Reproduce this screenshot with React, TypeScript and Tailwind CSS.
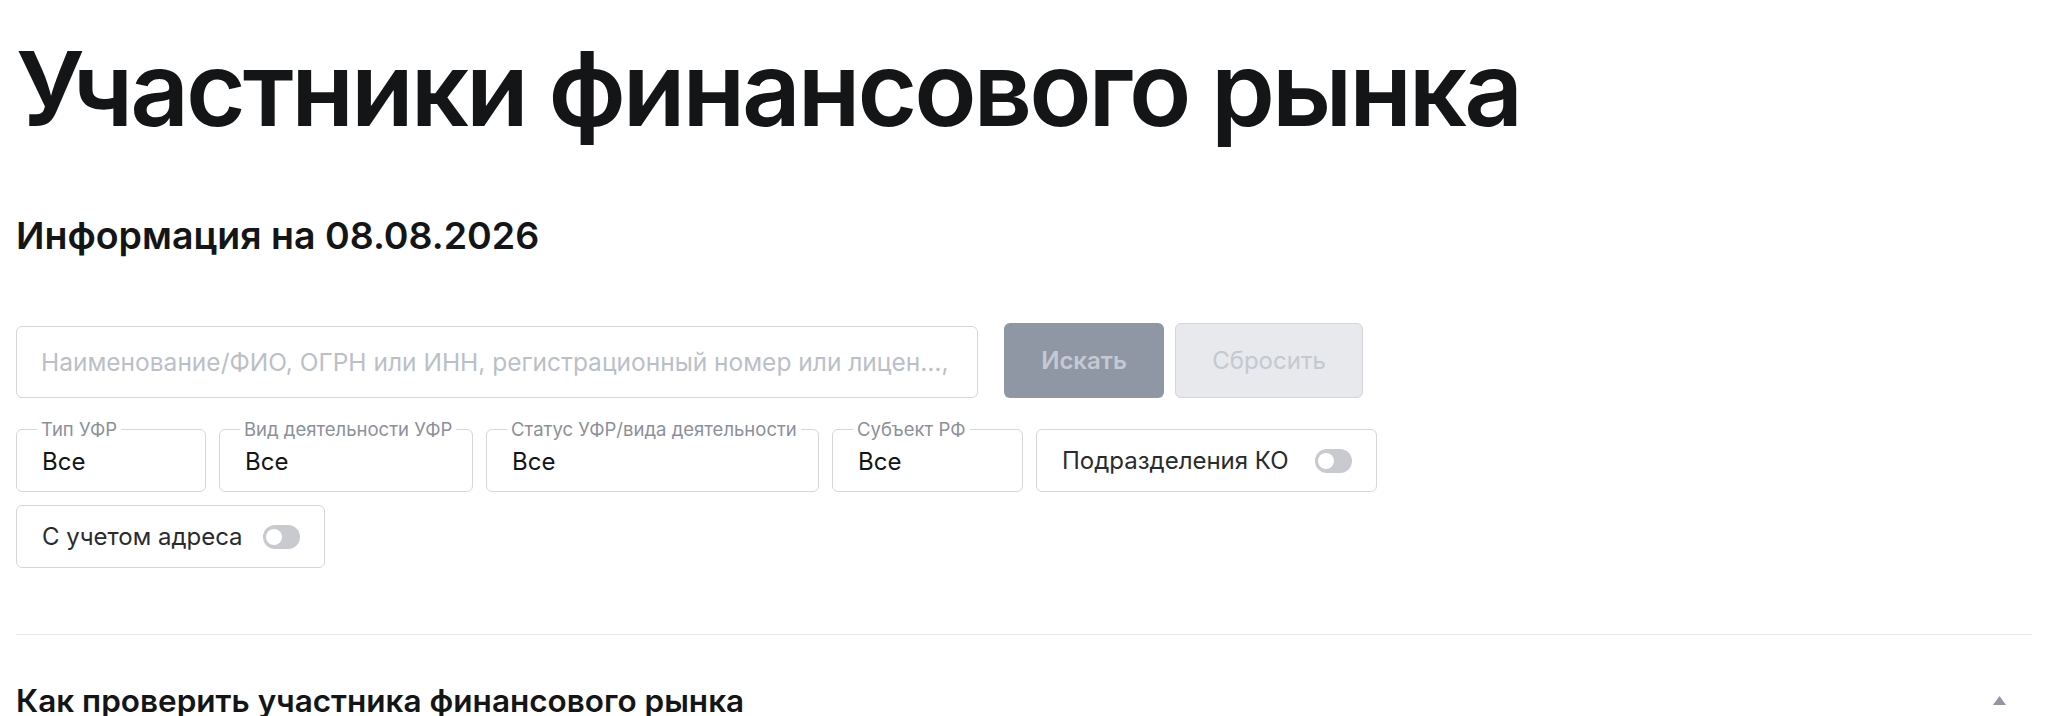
const font = { fontFamily: 'Inter, "Noto Sans", Roboto, sans-serif' };

function Toggle() {
  return (
    <span className="relative inline-flex h-[24px] w-[37px] shrink-0 items-center rounded-full bg-[#c8cacf]">
      <span className="ml-[3px] h-[16px] w-[16px] rounded-full bg-white"></span>
    </span>
  );
}

function SelectBox({ label, width }: { label: string; width: string }) {
  return (
    <div className={`relative flex h-[63px] items-center rounded-md border border-[#d4d7dc] px-[25px] pt-[3px] ${width}`}>
      <span className="absolute -top-[11px] left-[20px] bg-white px-[4px] text-[18.5px] leading-[20px] text-[#8b909a]">
        {label}
      </span>
      <span className="text-[24px] text-[#141517]">Все</span>
    </div>
  );
}

function SwitchBox({ label, width }: { label: string; width: string }) {
  return (
    <div className={`flex h-[63px] items-center justify-between rounded-md border border-[#d4d7dc] pl-[25px] pr-[24px] ${width}`}>
      <span className="text-[24px] text-[#2a2b2e]">{label}</span>
      <Toggle />
    </div>
  );
}

export default function App() {
  return (
    <main className="min-h-screen bg-white px-4 text-[#141517]" style={font}>
      <h1 className="pt-[38px] text-[102.5px] font-semibold leading-none tracking-[-0.03em]">Участники финансового рынка</h1>

      <h2 className="mt-[76px] text-[37.5px] font-semibold leading-none">Информация на 08.08.2026</h2>

      <div className="mt-[69px] flex items-end">
        <div className="flex h-[72px] w-[962px] items-center rounded-md border border-[#d4d7dc] px-6">
          <span className="truncate text-[24.5px] text-[#bbbfc9]">
            Наименование/ФИО, ОГРН или ИНН, регистрационный номер или лицен…,
          </span>
        </div>
        <button className="ml-[26px] h-[75px] w-[160px] rounded-md bg-[#8f97a5] text-[24px] font-semibold text-[#c4c9d2]">
          Искать
        </button>
        <button className="ml-[11px] h-[75px] w-[188px] rounded-md border border-[#d3d6db] bg-[#e8e9ec] text-[24px] text-[#c4c8d0]">
          Сбросить
        </button>
      </div>

      <div className="mt-[31px] flex flex-col gap-[13px]">
        <div className="flex gap-[13px]">
          <SelectBox label="Тип УФР" width="w-[190px]" />
          <SelectBox label="Вид деятельности УФР" width="w-[254px]" />
          <SelectBox label="Статус УФР/вида деятельности" width="w-[333px]" />
          <SelectBox label="Субъект РФ" width="w-[191px]" />
          <SwitchBox label="Подразделения КО" width="w-[341px]" />
        </div>
        <div className="flex">
          <SwitchBox label="С учетом адреса" width="w-[309px]" />
        </div>
      </div>

      <div className="mt-[66px] border-t border-[#e6e7ea]"></div>

      <div className="flex items-center justify-between pt-[50px]">
        <h3 className="text-[31.5px] font-semibold leading-none">Как проверить участника финансового рынка</h3>
        <svg width="13" height="9" viewBox="0 0 13 9" className="mr-[26px]">
          <path d="M6.5 0L13 9H0z" fill="#8f97a5" />
        </svg>
      </div>
    </main>
  );
}
